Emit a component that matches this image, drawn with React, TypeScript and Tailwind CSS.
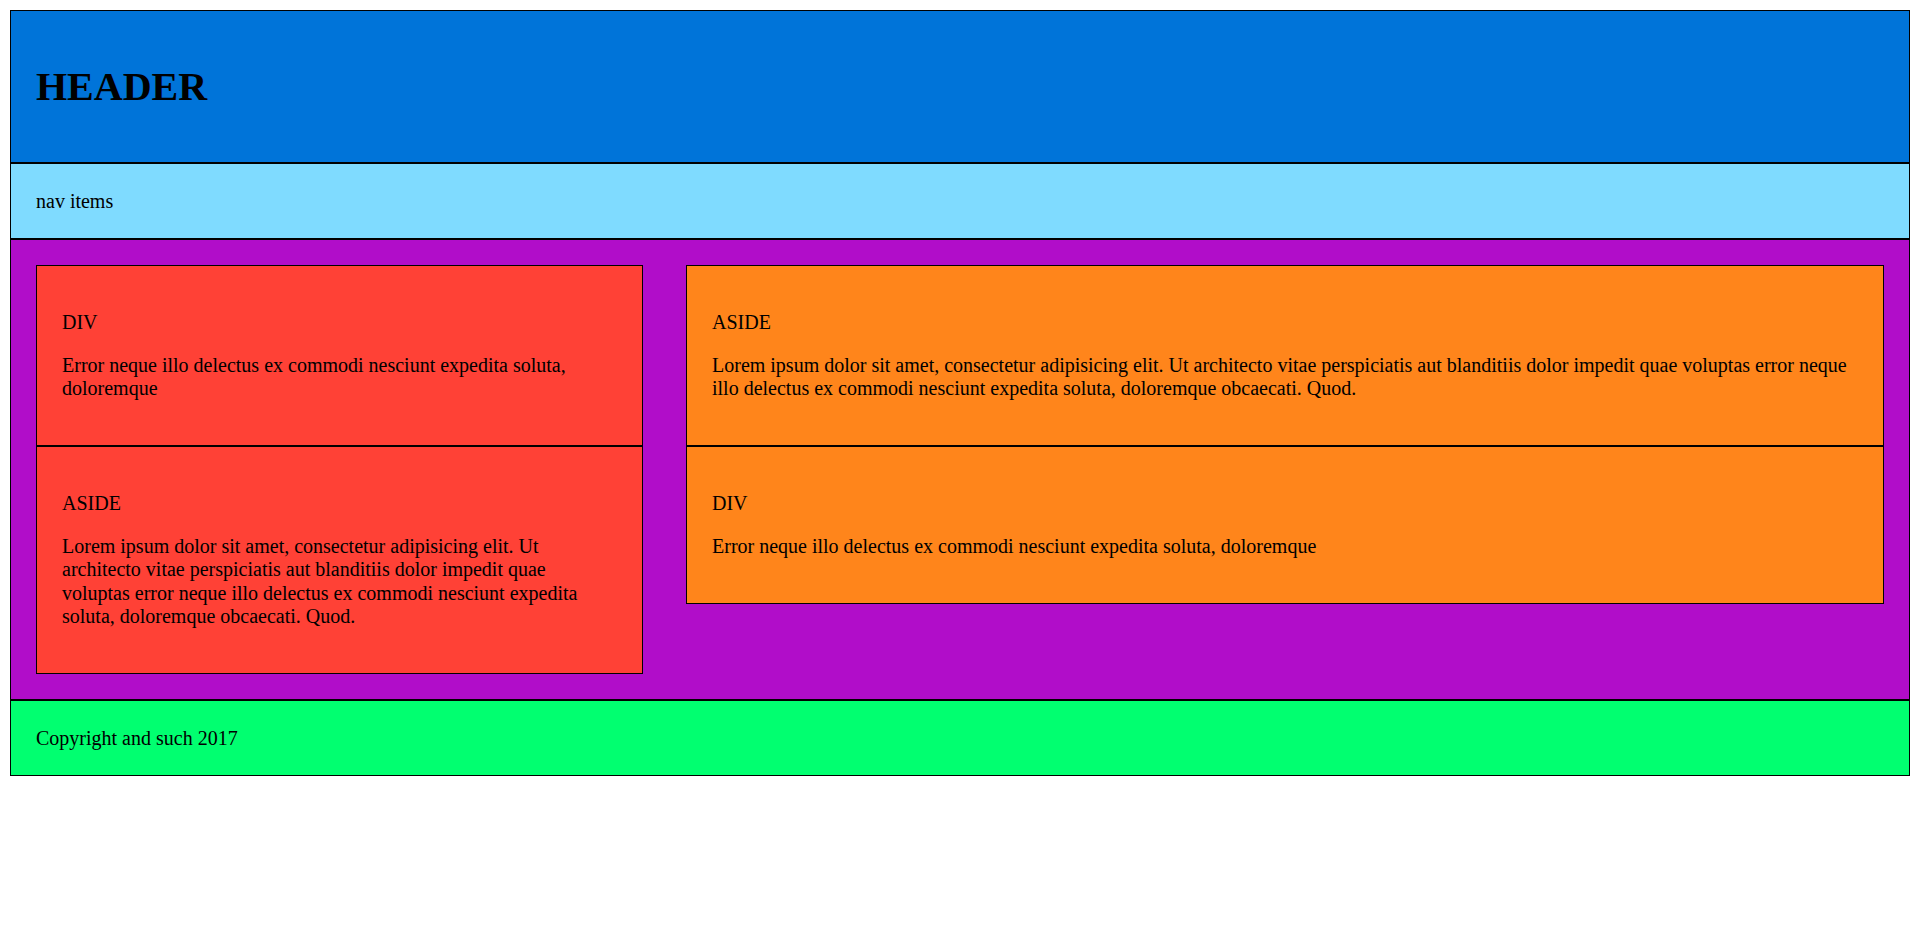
const Box: React.FC<{ title: string; text: string; color: string }> = ({
  title,
  text,
  color,
}) => {
  return (
    <div className={`border border-black p-[25px] ${color}`}>
      <p className="my-[20px] leading-[23.1px]">{title}</p>
      <p className="my-[20px] leading-[23.1px]">{text}</p>
    </div>
  );
};

const lorem =
  "Lorem ipsum dolor sit amet, consectetur adipisicing elit. Ut architecto vitae perspiciatis aut blanditiis dolor impedit quae voluptas error neque illo delectus ex commodi nesciunt expedita soluta, doloremque obcaecati. Quod.";
const error =
  "Error neque illo delectus ex commodi nesciunt expedita soluta, doloremque";

export default function App() {
  return (
    <div
      className="bg-white min-h-screen p-[10px] text-[20px] text-black"
      style={{ fontFamily: '"Liberation Serif", "Times New Roman", serif' }}
    >
      <header className="border border-black bg-[#0074d9] px-[25px] py-[25px]">
        <h1 className="my-[27px] text-[40px] font-bold leading-[47px]">
          HEADER
        </h1>
      </header>
      <nav className="border border-black bg-[#7fdbff] p-[25px] leading-[24px]">
        nav items
      </nav>
      <main className="border border-black bg-[#b10dc9] p-[25px] flex items-start gap-[43px]">
        <div className="w-[607px] shrink-0 flex flex-col">
          <Box title="DIV" text={error} color="bg-[#ff4136]" />
          <Box title="ASIDE" text={lorem} color="bg-[#ff4136]" />
        </div>
        <div className="flex-1 flex flex-col">
          <Box title="ASIDE" text={lorem} color="bg-[#ff851b]" />
          <Box title="DIV" text={error} color="bg-[#ff851b]" />
        </div>
      </main>
      <footer className="border border-black bg-[#01ff70] p-[25px] leading-[24px]">
        Copyright and such 2017
      </footer>
    </div>
  );
}
